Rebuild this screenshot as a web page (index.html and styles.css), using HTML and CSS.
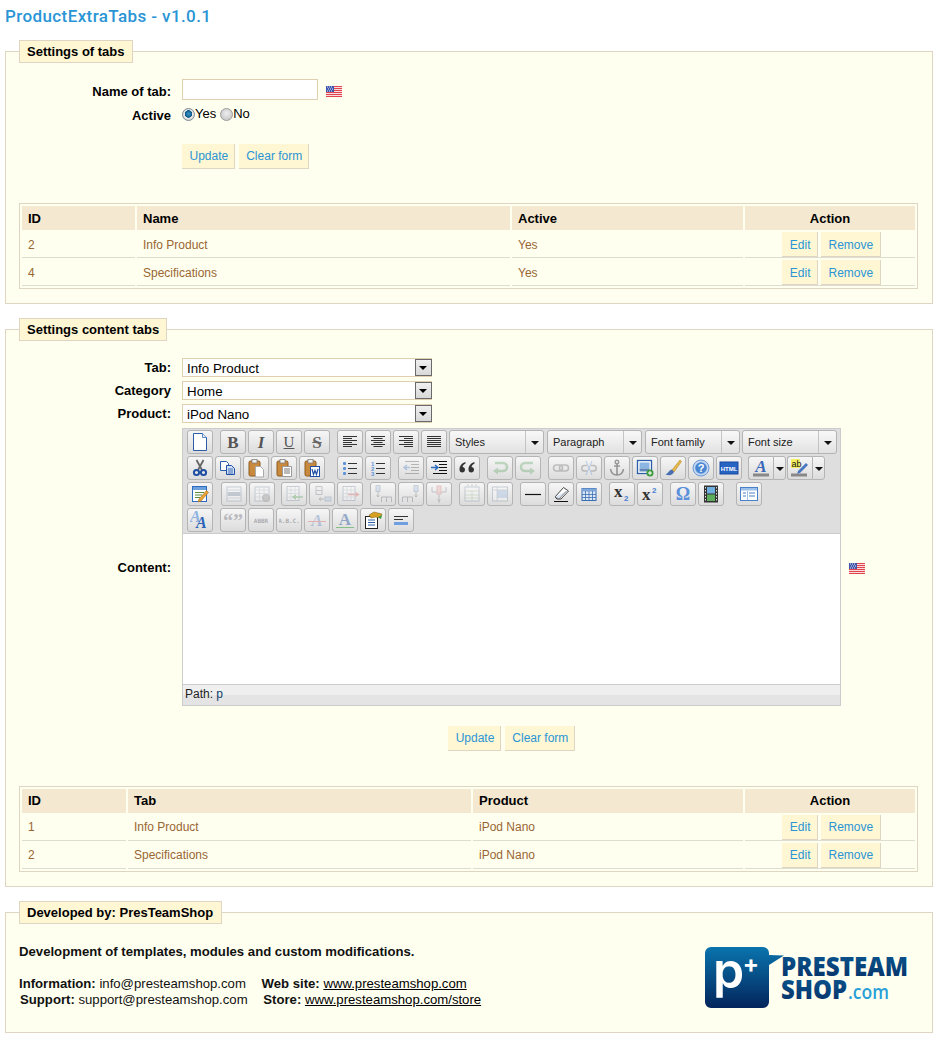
FILE: index.html
```html
<!DOCTYPE html>
<html lang="en">
<head>
<meta charset="utf-8">
<title>ProductExtraTabs</title>
<link rel="stylesheet" href="styles.css">
</head>
<body>
<svg class="sprite" aria-hidden="true">
  <defs>
    <linearGradient id="logoBlue" x1="0" y1="0" x2="0" y2="1"><stop offset="0" stop-color="#0a74ad"/><stop offset="1" stop-color="#03255c"/></linearGradient>
    <linearGradient id="logoText" x1="0" y1="0" x2="0" y2="1"><stop offset="0" stop-color="#0b5d96"/><stop offset="1" stop-color="#052c63"/></linearGradient>
  </defs>
  <symbol id="new" viewBox="0 0 20 20"><path d="M3.500 1.500h9l4 4v13h-13z" fill="#fff" stroke="#2b5ea6"/><path d="M12.500 1.500v4h4" fill="#dfe8f4" stroke="#2b5ea6" stroke-width=".7"/></symbol>
  <symbol id="al" viewBox="0 0 20 20"><path d="M3 4.500h14M3 6.500h9M3 8.500h14M3 10.500h9M3 12.500h14M3 14.500h9" stroke="#333"/></symbol>
  <symbol id="ac" viewBox="0 0 20 20"><path d="M3 4.500h14M5.500 6.500h9M3 8.500h14M5.500 10.500h9M3 12.500h14M5.500 14.500h9" stroke="#333"/></symbol>
  <symbol id="ar" viewBox="0 0 20 20"><path d="M3 4.500h14M8 6.500h9M3 8.500h14M8 10.500h9M3 12.500h14M8 14.500h9" stroke="#333"/></symbol>
  <symbol id="aj" viewBox="0 0 20 20"><path d="M3 4.500h14M3 6.500h14M3 8.500h14M3 10.500h14M3 12.500h14M3 14.500h14" stroke="#333"/></symbol>
  <symbol id="cut" viewBox="0 0 20 20"><path d="M6.500 2l5.500 10M13.500 2l-5.500 10" stroke="#666" stroke-width="1.800"/><circle cx="6.500" cy="14.500" r="2.600" fill="none" stroke="#1f4fa3" stroke-width="2"/><circle cx="13.500" cy="14.500" r="2.600" fill="none" stroke="#1f4fa3" stroke-width="2"/></symbol>
  <symbol id="copy" viewBox="0 0 20 20"><path d="M2.500 3.500h6l2 2v7h-8z" fill="#fff" stroke="#2b5ea6"/><path d="M8.500 7.500h5l3 3v6h-8z" fill="#cfe0f5" stroke="#1f4fa3"/><path d="M10 11h5M10 13h5M10 15h5" stroke="#1f4fa3" stroke-width=".8"/></symbol>
  <symbol id="paste" viewBox="0 0 20 20"><rect x="3" y="3" width="11" height="15" rx="1.500" fill="#c98a3e" stroke="#8a5a1e"/><rect x="6" y="1.500" width="5" height="3.500" fill="#eee" stroke="#777" stroke-width=".7"/><path d="M9.500 8.500h5l3 3v7.500h-8z" fill="#fff" stroke="#aaa"/></symbol>
  <symbol id="ptext" viewBox="0 0 20 20"><rect x="3" y="3" width="11" height="15" rx="1.500" fill="#c98a3e" stroke="#8a5a1e"/><rect x="6" y="1.500" width="5" height="3.500" fill="#eee" stroke="#777" stroke-width=".7"/><path d="M8.500 8.500h9v10h-9z" fill="#fff" stroke="#999"/><path d="M10 11h6M10 13h6M10 15h6" stroke="#777"/></symbol>
  <symbol id="pword" viewBox="0 0 20 20"><rect x="3" y="3" width="11" height="15" rx="1.500" fill="#c98a3e" stroke="#8a5a1e"/><rect x="6" y="1.500" width="5" height="3.500" fill="#eee" stroke="#777" stroke-width=".7"/><rect x="8.500" y="8.500" width="9" height="10" fill="#fff" stroke="#1f4fa3"/><path d="M10 11l1.500 5.500 1.500-4 1.500 4 1.500-5.500" fill="none" stroke="#1f4fa3" stroke-width="1.200"/></symbol>
  <symbol id="ul" viewBox="0 0 20 20"><path d="M8 5.500h9M8 10.500h9M8 15.500h9" stroke="#333"/><rect x="3" y="4" width="3" height="3" rx="1" fill="#5f93d8"/><rect x="3" y="9" width="3" height="3" rx="1" fill="#5f93d8"/><rect x="3" y="14" width="3" height="3" rx="1" fill="#5f93d8"/></symbol>
  <symbol id="out" viewBox="0 0 20 20"><path d="M4 3.500h14M10 6.500h8M10 9.500h8M10 12.500h8M4 15.500h14" stroke="#333"/><path d="M9 9.500H3M6 7L3 9.500 6 12" fill="none" stroke="#2b6bc0" stroke-width="1.400"/></symbol>
  <symbol id="ind" viewBox="0 0 20 20"><path d="M4 3.500h14M10 6.500h8M10 9.500h8M10 12.500h8M4 15.500h14" stroke="#111" stroke-width="1.200"/><path d="M2 9.500h6M6 7l3 2.500L6 12" fill="none" stroke="#2b6bc0" stroke-width="1.400"/></symbol>
  <symbol id="bq" viewBox="0 0 20 20"><path d="M8.500 4C5 5 2.500 7.500 2.500 11.500c0 2 1 3 2.700 3s2.800-1.200 2.800-2.800-1.100-2.700-2.500-2.700c.3-1.500 1.300-2.700 3-3.500zM17.500 4c-3.500 1-6 3.500-6 7.500 0 2 1 3 2.700 3s2.800-1.200 2.800-2.800-1.100-2.700-2.500-2.700c.3-1.500 1.300-2.700 3-3.500z" fill="#333"/></symbol>
  <symbol id="undo" viewBox="0 0 20 20"><path d="M5 5h8a4 4 0 0 1 0 8H6" fill="none" stroke="#4c9a50" stroke-width="2.600"/><path d="M8 9.500L3 13l5 3.500z" fill="#4c9a50"/></symbol>
  <symbol id="redo" viewBox="0 0 20 20"><path d="M15 5H7a4 4 0 0 0 0 8h7" fill="none" stroke="#4c9a50" stroke-width="2.600"/><path d="M12 9.500l5 3.500-5 3.500z" fill="#4c9a50"/></symbol>
  <symbol id="link" viewBox="0 0 20 20"><rect x="2.500" y="7" width="9" height="6" rx="3" fill="none" stroke="#555" stroke-width="1.500"/><rect x="8.500" y="7" width="9" height="6" rx="3" fill="none" stroke="#555" stroke-width="1.500"/></symbol>
  <symbol id="unlink" viewBox="0 0 20 20"><path d="M8 7.500H5.500a2.700 2.700 0 0 0 0 5.500H8M12 7.500h2.500a2.700 2.700 0 0 1 0 5.500H12" fill="none" stroke="#555" stroke-width="1.500"/><path d="M7 3l6 14M13 3L7 17" stroke="#3a78d0"/></symbol>
  <symbol id="anchor" viewBox="0 0 20 20"><circle cx="10" cy="4" r="1.800" fill="none" stroke="#444" stroke-width="1.400"/><path d="M10 6v11M7 8h6M3.500 11c.5 3.500 3 6 6.500 6s6-2.500 6.500-6" fill="none" stroke="#444" stroke-width="1.600"/></symbol>
  <symbol id="image" viewBox="0 0 20 20"><rect x="2.500" y="2.500" width="14" height="13" fill="#fff" stroke="#2b5ea6" stroke-width="1.300"/><rect x="4.500" y="4.500" width="10" height="6" fill="#8bb6e4"/><rect x="4.500" y="10.500" width="10" height="3" fill="#5f86b8"/><circle cx="15" cy="15" r="3.500" fill="#3c9a3c"/><path d="M13 15h4M15 13v4" stroke="#fff"/></symbol>
  <symbol id="brush" viewBox="0 0 20 20"><path d="M9 12L17 2l1.500 1.500L11 14z" fill="#e6b84a" stroke="#b58a28" stroke-width=".6"/><path d="M9 11.500c-3 .5-3 3-6.500 5 4 1.500 7.500.5 8.500-2.500z" fill="#4a6fb0"/></symbol>
  <symbol id="edit" viewBox="0 0 20 20"><rect x="2.500" y="2.500" width="14" height="15" fill="#fff" stroke="#2b6bc0"/><rect x="3" y="3" width="13" height="3" fill="#6ea0dc"/><path d="M5 8.500h9M5 11h7M5 13.500h5" stroke="#5a8a3c"/><path d="M9 15L16.500 6.500l2 2L11 17l-3 1z" fill="#e8a238" stroke="#a86f18" stroke-width=".6"/></symbol>
  <symbol id="rowp" viewBox="0 0 20 20"><rect x="3" y="3" width="14" height="14" fill="#fff" stroke="#6b7f95"/><rect x="3.500" y="8" width="13" height="4" fill="#6b7f95"/><path d="M3 6h14M3 14h14" stroke="#99a8b8"/></symbol>
  <symbol id="cellp" viewBox="0 0 20 20"><rect x="3" y="3" width="14" height="14" fill="#fff" stroke="#6b7f95"/><path d="M3 6h14M3 9.500h14M3 13h14M7.500 3v14M12 3v14" stroke="#99a8b8" stroke-width=".7"/><circle cx="14" cy="14" r="3.500" fill="#888" stroke="#555"/></symbol>
  <symbol id="rowb" viewBox="0 0 20 20"><rect x="3" y="2.500" width="12" height="14" fill="#fff" stroke="#6b7f95"/><path d="M3 6h12M3 9.500h12M3 13h12M7 3v14M11 3v14" stroke="#99a8b8" stroke-width=".7"/><path d="M19 13H9M12 11l-3 2 3 2" fill="none" stroke="#2f8f2f" stroke-width="1.400"/></symbol>
  <symbol id="rowa" viewBox="0 0 20 20"><path d="M4 2.500h6M4 6.500h6M4 10.500h6M4 2.500v8M10 2.500v8" fill="none" stroke="#667"/><rect x="13" y="13" width="6" height="4" fill="#9dc0ea" stroke="#6b7f95"/><path d="M7 15h5M9 13.500L7 15l2 1.500" fill="none" stroke="#555"/></symbol>
  <symbol id="rowd" viewBox="0 0 20 20"><rect x="3" y="2.500" width="12" height="14" fill="#fff" stroke="#6b7f95"/><path d="M3 6h12M3 9.500h12M3 13h12M7 3v14M11 3v14" stroke="#99a8b8" stroke-width=".7"/><path d="M8 10.500h10M15.500 8.500l3 2-3 2" fill="none" stroke="#d04a4a" stroke-width="1.400"/></symbol>
  <symbol id="colb" viewBox="0 0 20 20"><rect x="3" y="1.500" width="4" height="6" fill="#9dc0ea" stroke="#6b7f95"/><path d="M5 8v5M3.500 11.500L5 13l1.500-1.500" fill="none" stroke="#555"/><path d="M8.500 18v-5h10v5M13.500 13v5" fill="none" stroke="#556"/></symbol>
  <symbol id="cola" viewBox="0 0 20 20"><rect x="13" y="1.500" width="4" height="6" fill="#9dc0ea" stroke="#6b7f95"/><path d="M15 8v5M13.500 11.500L15 13l1.500-1.500" fill="none" stroke="#555"/><path d="M1.500 18v-5h10v5M6.500 13v5" fill="none" stroke="#556"/></symbol>
  <symbol id="cold" viewBox="0 0 20 20"><path d="M3 3v5h14V3M10 3v16" fill="none" stroke="#667"/><rect x="8" y="2" width="4" height="8" fill="#eba0a0" stroke="#c66"/><path d="M8.500 15.500L10 17l1.500-1.500" fill="none" stroke="#555"/></symbol>
  <symbol id="split" viewBox="0 0 20 20"><rect x="3" y="3" width="14" height="14" fill="#fff" stroke="#6b7f95"/><path d="M3 7h14M3 11h14M3 14h14M10 7v10" stroke="#7fa86a" stroke-width=".8"/><path d="M5 1h2M9 1h2M13 1h2" stroke="#777"/></symbol>
  <symbol id="merge" viewBox="0 0 20 20"><rect x="2.500" y="3" width="15" height="14" fill="#fff" stroke="#6b7f95"/><rect x="7" y="6" width="10" height="8" fill="#8fb4e4"/><path d="M2.500 6h15M7 3v14" stroke="#6b7f95" stroke-width=".7"/></symbol>
  <symbol id="hr" viewBox="0 0 20 20"><path d="M2 10.500h16" stroke="#111" stroke-width="1.200"/></symbol>
  <symbol id="erase" viewBox="0 0 20 20"><path d="M4 13L12.500 3.500l5 3.500L10 15H6z" fill="#fff" stroke="#444"/><path d="M4 13l4 2 7.500-8" fill="#d8e4f2" stroke="#444" stroke-width=".6"/><path d="M3 17.500h14" stroke="#111"/></symbol>
  <symbol id="visual" viewBox="0 0 20 20"><rect x="3" y="4.500" width="14" height="12" fill="#dce8f6" stroke="#3a6cb0"/><rect x="3" y="4.500" width="14" height="3" fill="#7ea6da"/><path d="M3 10.500h14M3 13.500h14M6.500 7v10M10 7v10M13.500 7v10" stroke="#3a6cb0" stroke-width=".8"/></symbol>
  <symbol id="media" viewBox="0 0 20 20"><rect x="3" y="1.500" width="14" height="17" fill="#333"/><rect x="6" y="3" width="8" height="6.500" fill="#6fb0e0"/><rect x="6" y="10.500" width="8" height="6.500" fill="#5cae5c"/><path d="M4.500 3v14M15.500 3v14" stroke="#ddd" stroke-dasharray="1.500 1.500"/></symbol>
  <symbol id="tpl" viewBox="0 0 20 20"><rect x="1.500" y="3.500" width="17" height="13" fill="#fff" stroke="#4a80c8"/><rect x="2" y="4" width="16" height="2.500" fill="#9dc0ea"/><path d="M4 9h3M4 12h3M10 9h6M10 12h6" stroke="#4a80c8"/><path d="M8.500 7v9" stroke="#9dc0ea"/></symbol>
  <symbol id="attr" viewBox="0 0 20 20"><rect x="2.500" y="6.500" width="12" height="12" fill="#fff" stroke="#222"/><path d="M5 10h7M5 12.500h7M5 15h7" stroke="#2b5ea6"/><path d="M6 5l5-3 8 2-2 4-4-1-5 1z" fill="#d8a020" stroke="#7a5a10" stroke-width=".5"/><path d="M15 7l3 2 1-4z" fill="#3c9a3c"/></symbol>
  <symbol id="nb" viewBox="0 0 20 20"><path d="M3 6.500h14M3 9.500h9" stroke="#333" stroke-width="1.200"/><rect x="3" y="12" width="14" height="3" fill="#6f9fe0"/></symbol>
  <symbol id="flag" viewBox="0 0 16 11"><rect width="16" height="11" fill="#fbdcdc"/><path d="M0 .5h16M0 2.500h16M0 4.500h16M0 6.500h16M0 8.500h16M0 10.500h16" stroke="#e2444e"/><rect width="8" height="6" fill="#3f55ac"/><path d="M1 1h1M3 1h1M5 1h1M2 3h1M4 3h1M6 3h1M1 5h1M3 5h1M5 5h1" stroke="#e8ecfa"/></symbol>
</svg>

<h1 class="title">ProductExtraTabs - v1.0.1</h1>

<fieldset class="panel panel-first">
  <legend>Settings of tabs</legend>
  <div class="form-grid">
    <label class="lbl lbl-name">Name of tab:</label>
    <div class="name-field"><input class="text-input" type="text"><svg class="flag"><use href="#flag"/></svg></div>
    <label class="lbl lbl-active">Active</label>
    <div class="radios"><input class="radio" type="radio" name="act" checked><span>Yes</span><input class="radio radio-no" type="radio" name="act"><span>No</span></div>
    <div class="actions actions-first"><a class="btn">Update</a><a class="btn">Clear form</a></div>
  </div>
  <table class="grid grid-first">
    <colgroup><col class="c1"><col class="c2"><col class="c3"><col class="c4"></colgroup>
    <thead><tr><th>ID</th><th>Name</th><th>Active</th><th class="center">Action</th></tr></thead>
    <tbody>
      <tr><td>2</td><td>Info Product</td><td>Yes</td><td class="cell-actions"><a class="btn">Edit</a><a class="btn">Remove</a></td></tr>
      <tr><td>4</td><td>Specifications</td><td>Yes</td><td class="cell-actions"><a class="btn">Edit</a><a class="btn">Remove</a></td></tr>
    </tbody>
  </table>
</fieldset>

<fieldset class="panel panel-content">
  <legend>Settings content tabs</legend>
  <div class="form-grid form-content">
    <label class="lbl">Tab:</label>
    <div class="sel"><select><option>Info Product</option></select><span class="sel-arrow"></span></div>
    <label class="lbl">Category</label>
    <div class="sel"><select><option>Home</option></select><span class="sel-arrow"></span></div>
    <label class="lbl">Product:</label>
    <div class="sel"><select><option>iPod Nano</option></select><span class="sel-arrow"></span></div>
    <label class="lbl lbl-content">Content:</label>
    <div class="editor-wrap">
      <div class="editor">
        <div class="toolbar">
          <div class="tb-row">
            <div class="grp"><button class="b"><svg class="i"><use href="#new"/></svg></button></div>
            <div class="grp"><button class="b glyph g-b">B</button><button class="b glyph g-i">I</button><button class="b glyph g-u">U</button><button class="b glyph g-s">S</button></div>
            <div class="grp"><button class="b"><svg class="i"><use href="#al"/></svg></button><button class="b"><svg class="i"><use href="#ac"/></svg></button><button class="b"><svg class="i"><use href="#ar"/></svg></button><button class="b"><svg class="i"><use href="#aj"/></svg></button></div>
            <div class="grp m2"><div class="lb"><span class="lb-t">Styles</span><span class="lb-a"></span></div></div>
            <div class="grp m3"><div class="lb lb-s"><span class="lb-t">Paragraph</span><span class="lb-a"></span></div></div>
            <div class="grp m3"><div class="lb lb-s"><span class="lb-t">Font family</span><span class="lb-a"></span></div></div>
            <div class="grp m2"><div class="lb lb-s"><span class="lb-t">Font size</span><span class="lb-a"></span></div></div>
          </div>
          <div class="tb-row">
            <div class="grp"><button class="b"><svg class="i"><use href="#cut"/></svg></button><button class="b"><svg class="i"><use href="#copy"/></svg></button><button class="b"><svg class="i"><use href="#paste"/></svg></button><button class="b"><svg class="i"><use href="#ptext"/></svg></button><button class="b"><svg class="i"><use href="#pword"/></svg></button></div>
            <div class="grp m12"><button class="b"><svg class="i"><use href="#ul"/></svg></button><button class="b"><svg class="i" viewBox="0 0 20 20"><path d="M8 5.500h9M8 10.500h9M8 15.500h9" stroke="#333"/><text class="t6" x="3" y="7.500" fill="#5f93d8">1</text><text class="t6" x="3" y="12.500" fill="#5f93d8">2</text><text class="t6" x="3" y="17.500" fill="#5f93d8">3</text></svg></button></div>
            <div class="grp"><button class="b off"><svg class="i"><use href="#out"/></svg></button><button class="b"><svg class="i"><use href="#ind"/></svg></button><button class="b"><svg class="i"><use href="#bq"/></svg></button></div>
            <div class="grp"><button class="b off"><svg class="i"><use href="#undo"/></svg></button><button class="b off"><svg class="i"><use href="#redo"/></svg></button></div>
            <div class="grp"><button class="b off"><svg class="i"><use href="#link"/></svg></button><button class="b off"><svg class="i"><use href="#unlink"/></svg></button><button class="b semi"><svg class="i"><use href="#anchor"/></svg></button><button class="b"><svg class="i"><use href="#image"/></svg></button><button class="b"><svg class="i"><use href="#brush"/></svg></button><button class="b"><svg class="i" viewBox="0 0 20 20"><circle cx="10" cy="10" r="8" fill="#c3d8f0" stroke="#6d9ad6"/><circle cx="10" cy="10" r="5.800" fill="#4a86d2"/><text class="tq" x="10" y="14" fill="#fff">?</text></svg></button><button class="b"><svg class="i" viewBox="0 0 20 20"><rect x="1" y="4" width="18" height="12" fill="#2764c4" stroke="#174a9c"/><text class="th" x="10" y="12.500" fill="#fff">HTML</text></svg></button></div>
            <div class="grp m6 split"><button class="b b-main"><svg class="i" viewBox="0 0 20 20"><text class="ta" x="10" y="14" fill="#3a68b8">A</text><rect x="2" y="15.500" width="16" height="3" fill="#888"/></svg></button><span class="b-arrow"></span></div>
            <div class="grp m1 split"><button class="b b-main"><svg class="i" viewBox="0 0 20 20"><rect x="1" y="1" width="9" height="9" fill="#f5ee60"/><text class="tab" x="1.500" y="9" fill="#111">ab</text><path d="M8 13l8-8 2 2-8 8-3 1z" fill="#4a78c0"/><rect x="1" y="15.500" width="16" height="3" fill="#888"/></svg></button><span class="b-arrow"></span></div>
          </div>
          <div class="tb-row">
            <div class="grp"><button class="b"><svg class="i"><use href="#edit"/></svg></button></div>
            <div class="grp m8"><button class="b off"><svg class="i"><use href="#rowp"/></svg></button><button class="b off"><svg class="i"><use href="#cellp"/></svg></button></div>
            <div class="grp m6"><button class="b off"><svg class="i"><use href="#rowb"/></svg></button><button class="b off"><svg class="i"><use href="#rowa"/></svg></button><button class="b off"><svg class="i"><use href="#rowd"/></svg></button></div>
            <div class="grp"><button class="b off"><svg class="i"><use href="#colb"/></svg></button><button class="b off"><svg class="i"><use href="#cola"/></svg></button><button class="b off"><svg class="i"><use href="#cold"/></svg></button></div>
            <div class="grp"><button class="b off"><svg class="i"><use href="#split"/></svg></button><button class="b off"><svg class="i"><use href="#merge"/></svg></button></div>
            <div class="grp"><button class="b"><svg class="i"><use href="#hr"/></svg></button><button class="b"><svg class="i"><use href="#erase"/></svg></button><button class="b"><svg class="i"><use href="#visual"/></svg></button></div>
            <div class="grp"><button class="b"><svg class="i" viewBox="0 0 20 20"><text class="tx" x="2" y="13" fill="#333">x</text><text class="t2" x="12" y="17" fill="#4a80d0">2</text></svg></button><button class="b"><svg class="i" viewBox="0 0 20 20"><text class="tx" x="2" y="15.500" fill="#333">x</text><text class="t2" x="12" y="9" fill="#4a80d0">2</text></svg></button></div>
            <div class="grp"><button class="b"><svg class="i" viewBox="0 0 20 20"><text class="to" x="10" y="16" fill="#5a90dc">Ω</text></svg></button><button class="b"><svg class="i"><use href="#media"/></svg></button></div>
            <div class="grp m12"><button class="b"><svg class="i"><use href="#tpl"/></svg></button></div>
          </div>
          <div class="tb-row">
            <div class="grp"><button class="b"><svg class="i" viewBox="0 0 20 20"><text class="ta2" x="0" y="12" fill="#8db3e2">A</text><text class="ta2" x="6" y="18" fill="#2a62b8">A</text></svg></button></div>
            <div class="grp"><button class="b off"><svg class="i" viewBox="0 0 20 20"><text class="tc" x="10" y="18" fill="#445">“”</text></svg></button><button class="b off"><svg class="i" viewBox="0 0 20 20"><text class="ts" x="10" y="12.500" fill="#223">ABBR</text></svg></button><button class="b off"><svg class="i" viewBox="0 0 20 20"><text class="ts" x="10" y="12.500" fill="#223">A.B.C.</text></svg></button><button class="b off"><svg class="i" viewBox="0 0 20 20"><text class="ta" x="10" y="16" fill="#3a68b8">A</text><path d="M1 11.500h18" stroke="#e03030"/></svg></button><button class="b semi"><svg class="i" viewBox="0 0 20 20"><text class="tn" x="10" y="15" fill="#3a68a8">A</text><path d="M1 17.500h18" stroke="#2f9f2f"/></svg></button><button class="b"><svg class="i"><use href="#attr"/></svg></button><button class="b"><svg class="i"><use href="#nb"/></svg></button></div>
          </div>
        </div>
        <div class="edit-area"></div>
        <div class="pathbar">Path: <span class="path-p">p</span></div>
      </div>
      <svg class="flag flag-editor"><use href="#flag"/></svg>
    </div>
    <div class="actions actions-second"><a class="btn">Update</a><a class="btn">Clear form</a></div>
  </div>
  <table class="grid grid-second">
    <colgroup><col class="d1"><col class="d2"><col class="d3"><col class="d4"></colgroup>
    <thead><tr><th>ID</th><th>Tab</th><th>Product</th><th class="center">Action</th></tr></thead>
    <tbody>
      <tr><td>1</td><td>Info Product</td><td>iPod Nano</td><td class="cell-actions"><a class="btn">Edit</a><a class="btn">Remove</a></td></tr>
      <tr><td>2</td><td>Specifications</td><td>iPod Nano</td><td class="cell-actions"><a class="btn">Edit</a><a class="btn">Remove</a></td></tr>
    </tbody>
  </table>
</fieldset>

<fieldset class="panel panel-dev">
  <legend>Developed by: PresTeamShop</legend>
  <div class="dev">
    <div class="dev-text">
      <p class="dev-lead">Development of templates, modules and custom modifications.</p>
      <p class="dev-line"><b>Information:</b> info@presteamshop.com <b class="dev-second">Web site:</b> <a class="dev-link">www.presteamshop.com</a></p>
      <p class="dev-line dev-line-2"><b>Support:</b> support@presteamshop.com <b class="dev-second">Store:</b> <a class="dev-link">www.presteamshop.com/store</a></p>
    </div>
    <svg class="logo" viewBox="0 0 210 64" role="img" aria-label="PresTeamShop.com">
      <path d="M6 2h52a6 6 0 0 1 6 6v2l15 .5L64 20v37a6 6 0 0 1-6 6H6a6 6 0 0 1-6-6V8a6 6 0 0 1 6-6z" fill="url(#logoBlue)"/>
      <text class="logo-p" x="8" y="43" fill="#fff">p</text>
      <text class="logo-plus" x="46" y="27" fill="#fff">+</text>
      <text class="logo-t" x="76" y="31" textLength="127" lengthAdjust="spacingAndGlyphs" fill="url(#logoText)">PRESTEAM</text>
      <text class="logo-t" x="76" y="54" textLength="66" lengthAdjust="spacingAndGlyphs" fill="url(#logoText)">SHOP</text>
      <text class="logo-c" x="143" y="54" textLength="41" lengthAdjust="spacingAndGlyphs" fill="#2a9fd8">.com</text>
    </svg>
  </div>
</fieldset>
</body>
</html>
```

FILE: styles.css
```css
* { box-sizing: border-box; }
html, body { margin: 0; padding: 0; background: #fff; }
body { padding: 0 6px 0 5px; font-family: "Liberation Sans", Arial, sans-serif; font-size: 12px; color: #000; }
.sprite { position: absolute; width: 0; height: 0; overflow: hidden; }

.title { margin: 0; padding-top: 7px; height: 40px; font-family: Roboto, sans-serif; font-size: 17px; line-height: 18px; font-weight: 500; letter-spacing: .4px; color: #2a95d5; }

.panel { display: block; min-width: 0; margin: 0 0 14px; padding: 0 14px 14px 13px; background: #fffff0; border: 1px solid #dfd5c3; }
.panel legend { height: 23px; margin: 0; padding: 0 7px; background: #fff6d3; border: 1px solid #dfd5c3; font-size: 13px; font-weight: 700; line-height: 21px; color: #000; }
.panel-dev legend { padding-right: 8px; }

.form-grid { display: grid; grid-template-columns: 152px 1fr; column-gap: 11px; align-items: start; padding-top: 16px; }
.lbl { font-size: 13px; font-weight: 700; text-align: right; line-height: 16px; }
.lbl-name { margin-top: 5px; }
.lbl-active { margin-top: 8px; }
.name-field { display: flex; align-items: center; height: 21px; }
.text-input { width: 136px; height: 21px; padding: 0 4px; margin: 0; background: #fff; border: 1px solid #e0d0b1; outline: none; }
.flag { display: block; flex: none; width: 16px; height: 11px; margin: 3px 0 0 8px; }
.radios { display: flex; align-items: flex-start; height: 20px; margin-top: 7px; font-size: 13px; line-height: 14px; }
.radio { appearance: none; flex: none; width: 13px; height: 13px; margin: 1px 0 0; border: 1px solid #9a9a9a; border-radius: 50%; background: radial-gradient(circle at 50% 40%, #eee, #bdbdbd); }
.radio:checked { background: radial-gradient(circle at 50% 45%, #3a9ccf 0, #0d5584 3.5px, #e8e8e8 4px, #c8c8c8); border-color: #7c8a94; }
.radio-no { margin-left: 4px; }

.actions { grid-column: 2; display: flex; gap: 4px; }
.actions-first { margin-top: 17px; margin-bottom: 34px; }
.actions-second { justify-content: center; width: 659px; margin-top: 16px; margin-bottom: 35px; }
.btn { display: inline-block; height: 25px; padding: 0 5.5px 0 7.5px; background: #fff6d3; border: 0 solid #dfd5c3; border-width: 0 1px 1px 0; font-size: 12px; line-height: 25px; color: #2a95d5; vertical-align: top; }
.cell-actions .btn { padding-right: 6.5px; }
.cell-actions .btn + .btn { margin-left: 3px; }
.grid-first .cell-actions .btn { line-height: 26px; }

.grid { width: 899px; table-layout: fixed; border: 1px solid #dfd5c3; border-collapse: separate; border-spacing: 2px; }
.grid th { height: 24px; padding: 0 6px; background: #f4e8d0; font-size: 13px; font-weight: 700; text-align: left; color: #000; }
.grid th.center { text-align: center; }
.grid td { height: 26px; padding: 0 6px; border-bottom: 1px solid #dfdcd0; font-size: 12px; color: #996633; }
.grid .cell-actions { padding: 0 0 0 3px; line-height: 0; text-align: center; vertical-align: top; }
.grid-second th, .grid-second td { padding-bottom: 2px; }
.grid-second .cell-actions { padding-bottom: 0; }
.c1 { width: 113px; } .c2 { width: 373px; } .c3 { width: 231px; } .c4 { width: 170px; }
.d1 { width: 104px; } .d2 { width: 343px; } .d3 { width: 270px; } .d4 { width: 170px; }

.form-content { row-gap: 4px; padding-top: 17px; }
.form-content .lbl { line-height: 19px; }
.sel { position: relative; width: 250px; height: 19px; }
.sel select { appearance: none; display: block; width: 100%; height: 19px; margin: 0; padding: 2px 0 0 4px; background: #fff; border: 1px solid #e0d0b1; border-radius: 0; font-family: "Liberation Sans", Arial, sans-serif; font-size: 13.33px; line-height: 15px; color: #000; }
.sel-arrow { position: absolute; top: 1px; right: 0; width: 17px; height: 17px; background: linear-gradient(#f0f0f0, #d8d8d8); border: 1px solid #6a6a6a; }
.sel-arrow::after { content: ""; position: absolute; left: 3px; top: 6px; border: 4px solid transparent; border-top: 4px solid #000; border-bottom: 0; }

.lbl-content { align-self: center; padding-top: 1px; }
.editor-wrap { display: flex; align-items: center; margin-top: 1px; }
.editor { flex: none; width: 659px; height: 278px; display: flex; flex-direction: column; border: 1px solid #ccc; }
.flag-editor { margin: 3px 0 0 8px; }
.toolbar { height: 105px; padding: 1px 0 0 4px; background: #dedede; border-bottom: 1px solid #ccc; }
.tb-row { display: flex; height: 24px; margin-bottom: 2px; }
.grp { display: flex; gap: 2px; margin-left: 7px; }
.grp:first-child { margin-left: 0; }
.m1 { margin-left: 1px; } .m2 { margin-left: 2px; } .m3 { margin-left: 3px; } .m6 { margin-left: 6px; } .m8 { margin-left: 8px; } .m12 { margin-left: 12px; }
.b { display: flex; align-items: center; justify-content: center; flex: none; width: 26px; height: 24px; margin: 0; padding: 0; background: linear-gradient(#f6f6f6, #dcdcdc); border: 1px solid #b4b4b4; border-radius: 3px; color: #555; }
.i { display: block; width: 20px; height: 20px; }
.off .i { opacity: .3; }
.semi .i { opacity: .5; }
.glyph { font-family: "Liberation Serif", serif; font-size: 17px; line-height: 1; }
.g-b { font-weight: 700; }
.g-i { font-style: italic; font-weight: 700; }
.g-u { text-decoration: underline; font-size: 15px; }
.g-s { text-decoration: line-through; font-weight: 700; color: #666; }
.split { gap: 0; }
.b-main { width: 25px; border-radius: 3px 0 0 3px; border-right: 0; }
.b-arrow { position: relative; display: block; width: 13px; height: 24px; background: linear-gradient(#f6f6f6, #dcdcdc); border: 1px solid #b4b4b4; border-radius: 0 3px 3px 0; }
.b-arrow::after, .lb-a::after { content: ""; position: absolute; left: 50%; top: 10px; margin-left: -4px; border: 4px solid transparent; border-top: 4px solid #111; border-bottom: 0; }
.lb { display: flex; width: 95px; height: 24px; background: linear-gradient(#f8f8f8, #e2e2e2); border: 1px solid #b4b4b4; border-radius: 3px; font-size: 11px; line-height: 22px; color: #222; }
.lb-t { flex: 1; padding-left: 5px; }
.lb-a { position: relative; width: 18px; border-left: 1px solid #c4c4c4; }

.edit-area { flex: 1; background: #fff; }
.pathbar { height: 21px; padding: 2px 0 0 2px; background: linear-gradient(#efefef 0 50%, #e4e4e4 50%); border-top: 1px solid #ccc; font-size: 12px; line-height: 14px; color: #222; }
.path-p { color: #0b3d6b; }

.dev { display: flex; justify-content: space-between; align-items: flex-start; height: 94px; }
.dev-text { font-size: 13.17px; line-height: 16px; color: #111; }
.dev-text p { margin: 0; }
.dev-text .dev-lead { padding-top: 20px; margin-bottom: 16px; font-weight: 700; }
.dev-second { margin-left: 12px; }
.dev-line-2 { padding-left: 1px; }
.dev-link { color: #000; text-decoration: underline; }
.logo { display: block; flex: none; width: 210px; height: 64px; margin: 21px 3px 0 0; }

/* svg text */
.t6 { font: 700 6px "Liberation Sans", sans-serif; }
.tq { font: 700 11px "Liberation Sans", sans-serif; text-anchor: middle; }
.th { font: 700 6px "Liberation Sans", sans-serif; text-anchor: middle; }
.ta { font: italic 700 17px "Liberation Serif", serif; text-anchor: middle; }
.tab { font: 400 9px "Liberation Sans", sans-serif; }
.tx { font: 700 17px "Liberation Serif", serif; }
.t2 { font: 700 8px "Liberation Sans", sans-serif; }
.to { font: 700 18px "Liberation Serif", serif; text-anchor: middle; }
.ta2 { font: italic 700 16px "Liberation Serif", serif; }
.tc { font: 700 20px "Liberation Serif", serif; text-anchor: middle; }
.ts { font: 700 6px "DejaVu Sans Mono", monospace; text-anchor: middle; }
.tn { font: 700 17px "Liberation Serif", serif; text-anchor: middle; }
.logo-p { font: 600 50px Inter, sans-serif; }
.logo-plus { font: 700 24px Inter, sans-serif; text-anchor: middle; }
.logo-t { font: 800 26px "Open Sans", sans-serif; }
.logo-c { font: 600 20px "Open Sans", sans-serif; }
```
